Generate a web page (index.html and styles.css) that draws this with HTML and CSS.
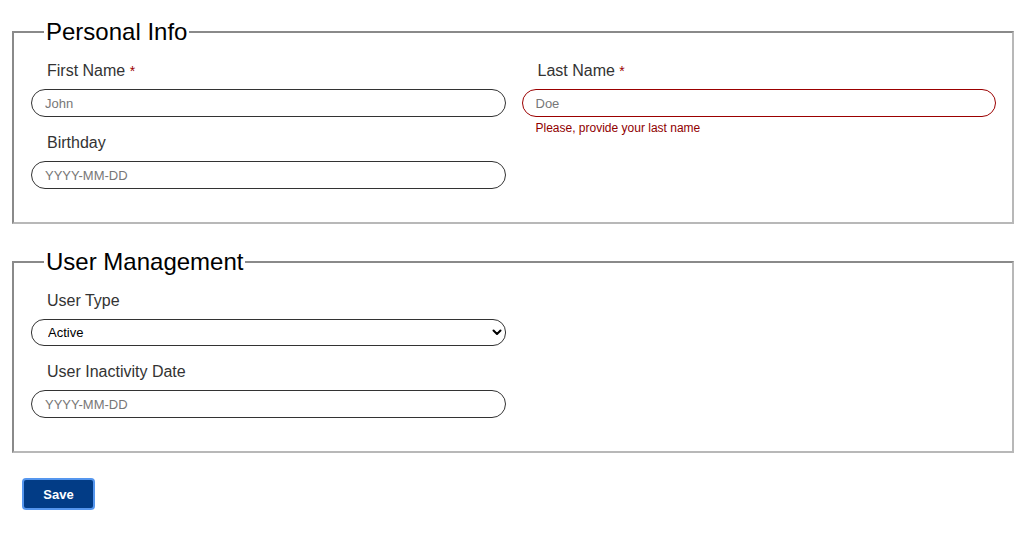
FILE: index.html
```html
<!DOCTYPE html>
<html lang="en">
<head>
<meta charset="utf-8">
<title>User form</title>
<link rel="stylesheet" href="styles.css">
</head>
<body>
<form class="page">
  <fieldset class="group">
    <legend class="group-title">Personal Info</legend>
    <div class="grid">
      <div class="field">
        <label class="label" for="first">First Name <span class="req">*</span></label>
        <input class="input" id="first" type="text" placeholder="John">
      </div>
      <div class="field">
        <label class="label" for="last">Last Name <span class="req">*</span></label>
        <input class="input input-error" id="last" type="text" placeholder="Doe">
        <div class="error">Please, provide your last name</div>
      </div>
      <div class="field">
        <label class="label" for="bday">Birthday</label>
        <input class="input" id="bday" type="text" placeholder="YYYY-MM-DD">
      </div>
    </div>
  </fieldset>

  <fieldset class="group">
    <legend class="group-title">User Management</legend>
    <div class="grid">
      <div class="field">
        <label class="label" for="utype">User Type</label>
        <div class="select-wrap">
          <select class="select" id="utype">
            <option>Active</option>
            <option>Inactive</option>
          </select>
          <svg class="chevron" width="10" height="7" viewBox="0 0 10 7" aria-hidden="true">
            <path d="M1.5 1.5 L5 5 L8.5 1.5" fill="none" stroke="#000" stroke-width="2" stroke-linecap="round" stroke-linejoin="round"/>
          </svg>
        </div>
      </div>
      <div class="field empty"></div>
      <div class="field">
        <label class="label" for="inact">User Inactivity Date</label>
        <input class="input" id="inact" type="text" placeholder="YYYY-MM-DD">
      </div>
    </div>
  </fieldset>

  <div class="actions">
    <button class="btn" type="button">Save</button>
  </div>
</form>
</body>
</html>
```

FILE: styles.css
```css
* { box-sizing: border-box; }

html, body {
  margin: 0;
  padding: 0;
  background: #fff;
}

body {
  font-family: "Liberation Sans", Arial, Helvetica, sans-serif;
  color: #333;
}

.page {
  padding: 18px 14px 0 12px;
}

.group {
  margin: 0 0 24px 0;
  padding: 15px 16px 33px 17px;
  border: 2px solid #8a8a8a;
  border-color: #8a8a8a #b8b8b8 #b8b8b8 #8a8a8a;
  min-width: 0;
}

.group + .group { margin-bottom: 25px; }

.group-title {
  font-size: 24px;
  line-height: 28px;
  color: #000;
  padding: 0 2px;
  margin-left: 13px;
}

.grid {
  display: grid;
  grid-template-columns: 1fr 1fr;
  column-gap: 16px;
  row-gap: 16px;
}

.field {
  display: flex;
  flex-direction: column;
  min-width: 0;
}

.label {
  font-size: 16px;
  line-height: 20px;
  color: #333;
  padding-left: 16px;
  margin-bottom: 8px;
}

.req {
  color: #9b0000;
  font-size: 14px;
}

.input {
  height: 28px;
  width: 100%;
  border: 1px solid #333;
  border-radius: 14px;
  padding: 0 13px;
  font-family: inherit;
  font-size: 13px;
  color: #333;
  background: #fff;
  outline: none;
}

.input::placeholder { color: #777; }

.input-error { border-color: #9b0000; }

.error {
  height: 0;
  margin-top: 4px;
  margin-bottom: -4px;
  padding-left: 14px;
  font-size: 12px;
  line-height: 14px;
  color: #8f0000;
  white-space: nowrap;
}

.select-wrap {
  position: relative;
}

.select {
  -webkit-appearance: none;
  appearance: none;
  width: 100%;
  height: 27px;
  border: 1px solid #333;
  border-radius: 13px;
  padding: 0 16px;
  font-family: inherit;
  font-size: 13px;
  color: #000;
  background: #fff;
  outline: none;
}

.chevron {
  position: absolute;
  right: 4px;
  top: 10px;
  pointer-events: none;
}

.actions {
  padding-left: 10px;
}

.btn {
  width: 73px;
  height: 32px;
  background: #023c86;
  border: 2px solid #5596ee;
  border-radius: 4px;
  color: #fff;
  font-family: inherit;
  font-size: 13px;
  font-weight: bold;
  cursor: pointer;
}
```
